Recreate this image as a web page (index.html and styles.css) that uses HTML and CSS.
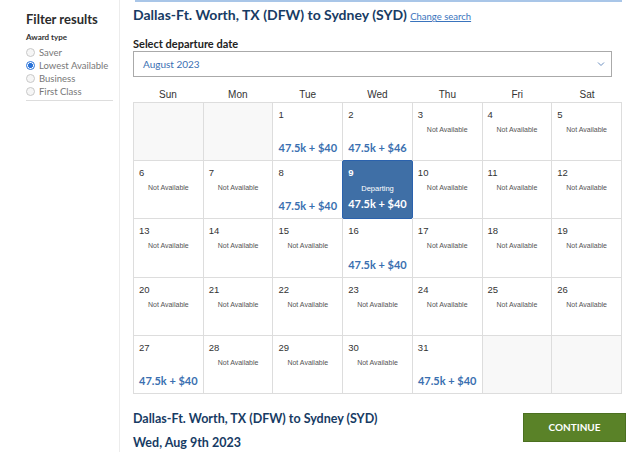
FILE: index.html
```html
<!DOCTYPE html>
<html lang="en">
<head>
  <meta charset="UTF-8" />
  <meta name="viewport" content="width=device-width, initial-scale=1" />
  <title>Select departure date</title>
  <link rel="stylesheet" href="styles.css">
</head>
<body>
<aside class="sidebar">
  <h2>Filter results</h2>
  <h4>Award type</h4>
  <label class="radio"><span class="dot"></span>Saver</label>
  <label class="radio"><span class="dot on"></span>Lowest Available</label>
  <label class="radio"><span class="dot"></span>Business</label>
  <label class="radio"><span class="dot"></span>First Class</label>
  <div class="rule"></div>
</aside>
<main class="main">
  <div class="topline"></div>
  <h1 class="title">Dallas-Ft. Worth, TX (DFW) to Sydney (SYD) <a href="#">Change search</a></h1>
  <h3 class="label">Select departure date</h3>
  <div class="select">
    <span>August 2023</span>
    <svg width="8" height="6" viewBox="0 0 8 6"><path d="M1 1.5 L4 4.5 L7 1.5" fill="none" stroke="#6b8fc0" stroke-width="1"/></svg>
  </div>
  <div class="days">
    <div>Sun</div><div>Mon</div><div>Tue</div><div>Wed</div><div>Thu</div><div>Fri</div><div>Sat</div>
  </div>
  <div class="calendar" id="calendar"></div>
  <div class="footer">
    <div class="summary">
      <p>Dallas-Ft. Worth, TX (DFW) to Sydney (SYD)</p>
      <p>Wed, Aug 9th 2023</p>
    </div>
    <button class="continue">CONTINUE</button>
  </div>
</main>

<script>
const priced = { 1: '47.5k + $40', 2: '47.5k + $46', 8: '47.5k + $40', 9: '47.5k + $40', 16: '47.5k + $40', 27: '47.5k + $40', 31: '47.5k + $40' };
const cal = document.getElementById('calendar');
const cells = [];
for (let i = 0; i < 2; i++) cells.push('<div class="cell empty"></div>');
for (let d = 1; d <= 31; d++) {
  if (d === 9) {
    cells.push(`<div class="cell picked"><span class="num">${d}</span><span class="dep">Departing</span><span class="price">${priced[d]}</span></div>`);
  } else if (priced[d]) {
    cells.push(`<div class="cell"><span class="num">${d}</span><span class="price">${priced[d]}</span></div>`);
  } else {
    cells.push(`<div class="cell"><span class="num">${d}</span><span class="na">Not Available</span></div>`);
  }
}
while (cells.length % 7) cells.push('<div class="cell empty"></div>');
cal.innerHTML = cells.join('');
</script>
</body>
</html>
```

FILE: styles.css
```css
* { box-sizing: border-box; }
body {
  margin: 0;
  display: flex;
  min-height: 452px;
  font-family: 'Lato', 'Liberation Sans', sans-serif;
  background: #fff;
  color: #333;
}
.sidebar {
  width: 120px;
  flex-shrink: 0;
  padding: 11px 6px 0 26px;
  border-right: 1px solid #ececec;
}
.sidebar h2 {
  margin: 0;
  font-size: 13px;
  font-weight: 700;
  color: #2b2b2b;
}
.sidebar h4 {
  margin: 5px 0 4px;
  font-size: 8px;
  font-weight: 700;
  color: #333;
}
.radio {
  display: flex;
  align-items: center;
  gap: 4px;
  height: 13px;
  font-size: 9.5px;
  color: #777;
  white-space: nowrap;
}
.dot {
  width: 9px;
  height: 9px;
  flex-shrink: 0;
  border-radius: 50%;
  border: 1px solid #c8c8c8;
  background: #f6f6f6;
}
.dot.on {
  border-color: #2a73d9;
  background: radial-gradient(circle, #2a73d9 0 2.2px, #fff 2.7px);
}
.rule {
  margin-top: 2px;
  border-top: 1px solid #ddd;
}
.main {
  padding: 0 14px 0 13px;
  width: 520px;
}
.topline {
  height: 2px;
  background: #a9c6e8;
  margin: 0 4px 0 2px;
}
.title {
  margin: 4px 0 0;
  font-size: 14px;
  font-weight: 700;
  color: #173b64;
}
.title a {
  font-size: 9.5px;
  font-weight: 400;
  color: #3a74bd;
}
.label {
  margin: 14px 0 1px;
  font-size: 11px;
  font-weight: 700;
  color: #222;
}
.select {
  height: 26px;
  width: 479px;
  border: 1px solid #aaa;
  display: flex;
  align-items: center;
  justify-content: space-between;
  padding: 0 6px 0 9px;
  font-size: 10px;
  color: #3a6fb3;
}
.days {
  display: grid;
  grid-template-columns: repeat(7, 1fr);
  width: 489px;
  margin-top: 12px;
  font-family: 'Liberation Sans', sans-serif;
  font-size: 10px;
  color: #333;
  text-align: center;
  height: 13px;
}
.calendar {
  display: grid;
  grid-template-columns: repeat(7, 1fr);
  grid-auto-rows: 58.2px;
  width: 489px;
  border-top: 1px solid #ddd;
  border-left: 1px solid #ddd;
  font-family: 'Liberation Sans', sans-serif;
}
.cell {
  border-right: 1px solid #ddd;
  border-bottom: 1px solid #ddd;
  display: flex;
  flex-direction: column;
  align-items: center;
  padding-top: 6px;
}
.cell.empty { background: #f8f8f8; }
.num {
  align-self: flex-start;
  margin-left: 5px;
  font-size: 9.5px;
  color: #333;
}
.na {
  margin-top: 6px;
  font-size: 7px;
  color: #555;
}
.price {
  margin-top: auto;
  margin-bottom: 6px;
  font-family: 'Lato', sans-serif;
  font-size: 11px;
  font-weight: 700;
  color: #3a6fb0;
}
.cell.picked {
  background: #3f6fa6;
  border: 1px solid #2b62ad;
  border-radius: 2px;
  margin: -1px 0 0 -1px;
  width: calc(100% + 1px);
}
.picked .num { color: #fff; font-weight: 700; }
.picked .dep {
  margin-top: 6px;
  font-size: 7.5px;
  color: #fff;
}
.picked .price { color: #fff; margin-top: 4px; }
.footer {
  display: flex;
  justify-content: space-between;
  align-items: flex-start;
  margin-top: 17px;
}
.summary p {
  margin: 0 0 9px;
  font-size: 12.5px;
  font-weight: 700;
  color: #173b64;
}
.continue {
  width: 103px;
  height: 29px;
  margin-top: 2px;
  background: #5a8228;
  border: 1px solid #4b7020;
  color: #fff;
  font-family: 'Lato', sans-serif;
  font-size: 10px;
  font-weight: 700;
  cursor: pointer;
}
```
